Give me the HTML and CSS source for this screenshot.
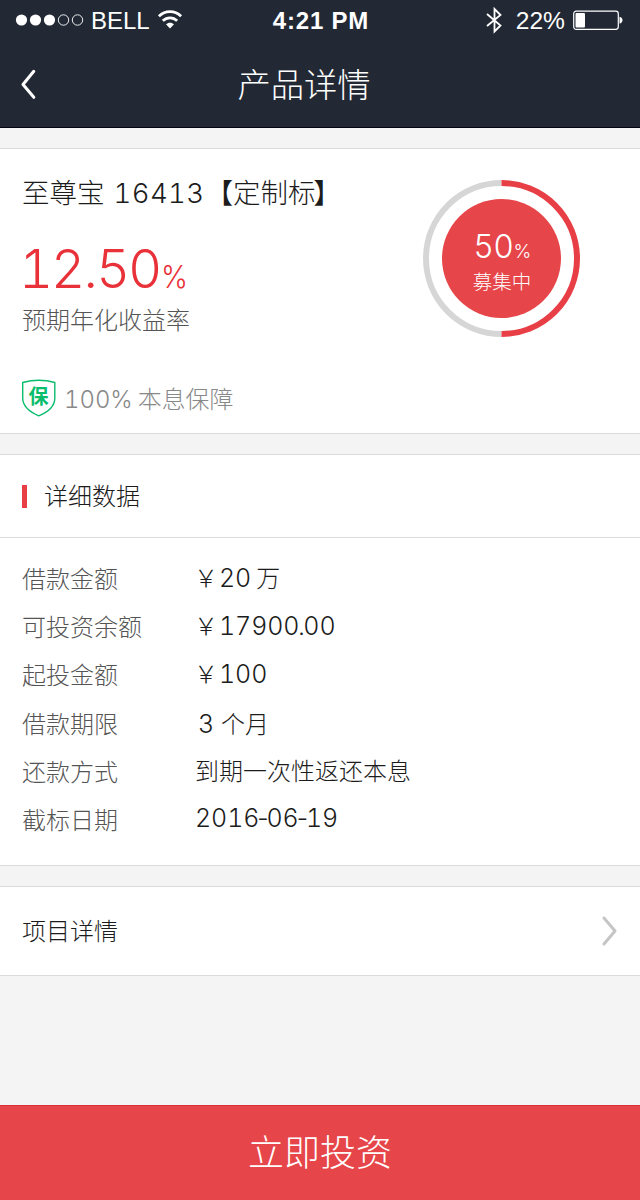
FILE: index.html
```html
<!DOCTYPE html>
<html lang="zh-CN">
<head>
<meta charset="utf-8">
<title>产品详情</title>
<link rel="stylesheet" href="styles.css">
</head>
<body>
<header class="top">
  <div class="status">
    <div class="status-left">
      <svg class="signal" width="68" height="13" viewBox="0 0 68 13"><g fill="#fff"><circle cx="5.5" cy="6" r="5.6"/><circle cx="19.5" cy="6" r="5.6"/><circle cx="33.5" cy="6" r="5.6"/></g><g fill="none" stroke="#fff" stroke-width=".9"><circle cx="47.5" cy="6" r="5.2"/><circle cx="61.5" cy="6" r="5.2"/></g></svg>
      <span class="carrier">BELL</span>
      <svg class="wifi" width="24" height="19" viewBox="0 0 24 19"><g fill="none" stroke="#fff" stroke-width="2.7"><path d="M.9 5.3C7.2-.9 16.8-.9 23.1 5.3"/><path d="M4.8 9.8C9 5.8 15 5.8 19.2 9.8"/></g><path d="M8 13.3C10.2 11.2 13.8 11.2 16 13.3L12 17.5Z" fill="#fff"/></svg>
    </div>
    <span class="clock">4:21 PM</span>
    <div class="status-right">
      <svg width="16" height="28" viewBox="0 0 16 28"><path d="M1 7L14.5 18.5L8.5 24.5V2L14.5 8L1 19" fill="none" stroke="#fff" stroke-width="1.8"/></svg>
      <span class="percent">22%</span>
      <svg class="battery" width="50" height="20" viewBox="0 0 50 20"><rect x=".7" y=".2" width="44.6" height="18.1" rx="2.5" fill="none" stroke="#fff" stroke-width="1.2"/><rect x="2.5" y="2" width="9.5" height="14.5" rx="1" fill="#fff"/><path d="M46.5 5.7C50.5 6.2 50.5 12 46.5 12.5Z" fill="#fff"/></svg>
    </div>
  </div>
  <nav class="nav">
    <svg class="back" width="16" height="30" viewBox="0 0 16 30"><path d="M13.8 2.3L3 15.5L13.8 28.3" fill="none" stroke="#fff" stroke-width="3" stroke-linecap="round" stroke-linejoin="round"/></svg>
    <h1 class="title">产品详情</h1>
  </nav>
</header>
<main class="content">
  <section class="card product">
    <div class="info">
      <h2 class="name"><span>至尊宝</span><span class="num code">16413</span><span class="tag"><b class="bracket">【</b>定制标<b class="bracket">】</b></span></h2>
      <div class="rate"><span class="num rate-value">12<i class="mark">.</i>50</span><span class="num rate-unit">%</span></div>
      <div class="caption">预期年化收益率</div>
      <div class="guarantee">
        <svg width="35" height="38" viewBox="0 0 35 38"><path d="M.7 2.5Q17 -2 32.8 2.5V18C32.8 27 25 32.5 16.7 35.8C9 32.5 .7 27 .7 18Z" fill="none" stroke="#09bd6c" stroke-width="1.4"/><text class="shield-text" x="16.6" y="23.5" text-anchor="middle">保</text></svg>
        <span class="guarantee-text"><span class="num guarantee-num">100%</span>本息保障</span>
      </div>
    </div>
    <div class="ring">
      <svg class="ring-track" width="158" height="158" viewBox="0 0 158 158"><g fill="none" stroke-width="6"><path d="M79.5 155A75.5 75.5 0 0 1 79.5 4" stroke="#d6d6d6"/><path d="M79.5 4A75.5 75.5 0 0 1 79.5 155" stroke="#e83f47"/></g><circle cx="79.5" cy="79.5" r="59.5" fill="#e64549"/></svg>
      <div class="ring-label">
        <div class="ring-value"><span class="num">50</span><span class="num ring-unit">%</span></div>
        <div class="ring-state">募集中</div>
      </div>
    </div>
  </section>
  <section class="card details">
    <h3 class="section-title"><span class="marker"></span><span class="heading">详细数据</span></h3>
    <dl class="rows">
      <div class="row"><dt>借款金额</dt><dd><span class="yen">￥</span><span class="num">20</span><span class="unit-wan">万</span></dd></div>
      <div class="row"><dt>可投资余额</dt><dd><span class="yen">￥</span><span class="num">17900<i class="mark point">.</i>00</span></dd></div>
      <div class="row"><dt>起投金额</dt><dd><span class="yen">￥</span><span class="num">100</span></dd></div>
      <div class="row"><dt>借款期限</dt><dd class="term"><span class="num">3</span><span class="unit">个月</span></dd></div>
      <div class="row"><dt>还款方式</dt><dd class="method">到期一次性返还本息</dd></div>
      <div class="row"><dt>截标日期</dt><dd class="date"><span class="num">2016<i class="mark dash">-</i>06<i class="mark dash">-</i>19</span></dd></div>
    </dl>
  </section>
  <a class="card link"><span class="link-text">项目详情</span><svg width="16" height="30" viewBox="0 0 16 30"><path d="M2 2L13 15L2 28" fill="none" stroke="#c5c5c5" stroke-width="3" stroke-linecap="round" stroke-linejoin="round"/></svg></a>
</main>
<button class="invest">立即投资</button>
</body>
</html>
```
FILE: styles.css
```css
* { box-sizing: border-box; }
body {
  margin: 0;
  width: 640px;
  height: 1200px;
  display: flex;
  flex-direction: column;
  background: #f4f4f4;
  color: #1c1c1c;
  font-family: "Noto Sans CJK SC", sans-serif;
  font-weight: 300;
  font-size: 24px;
  overflow: hidden;
}
h1, h2, h3, dl, dd { margin: 0; font-weight: inherit; }
svg { display: block; flex: none; overflow: visible; }
.num { font-family: Inter, "Liberation Sans", sans-serif; font-weight: 300; font-variant-numeric: tabular-nums; }
.mark { font-style: normal; font-variant-numeric: normal; }
.top { height: 128px; background: #222934; border-bottom: 1px solid #05050f; color: #fff; }
.status {
  height: 40px;
  display: grid;
  grid-template-columns: 1fr auto 1fr;
  align-items: center;
  padding: 0 17px 0 16px;
  font-family: "Liberation Sans", sans-serif;
  font-weight: 400;
  line-height: 40px;
}
.status-left, .status-right { display: flex; align-items: center; }
.status-left { padding-bottom: 1px; }
.carrier { margin: 1px 9px 0 7px; width: 58px; font-size: 24px; }
.clock { font-weight: 700; font-size: 24px; letter-spacing: .8px; margin-left: 3px; }
.status-right { justify-content: flex-end; }
.percent { margin: -1px 8px 0 14px; font-size: 24.6px; }
.nav { height: 87px; display: grid; grid-template-columns: 40px 1fr 40px; align-items: center; padding: 0 20px; }
.title { font-size: 33.3px; line-height: 48px; text-align: center; margin: -1px 32px 0 0; }
.content { flex: 1; padding-top: 20px; display: flex; flex-direction: column; gap: 20px; }
.card { background: #fff; border: solid #dbdbdb; border-width: 1px 0; flex: none; }
.product { height: 286px; display: flex; justify-content: space-between; padding: 0 60px 0 22px; }
.name { display: flex; align-items: baseline; margin-top: 22px; height: 40px; line-height: 40px; font-size: 27.5px; white-space: nowrap; }
.code { margin-left: 9px; letter-spacing: .4px; }
.tag { margin-left: 1px; }
.bracket { font-weight: 400; }
.bracket:last-child { margin-left: -2px; }
.rate { display: flex; align-items: baseline; height: 64px; margin-top: 26px; line-height: 64px; color: #e83138; }
.rate-value { font-size: 53px; letter-spacing: -2.2px; margin-left: -3px; }
.rate-unit { font-size: 31px; margin-left: 1px; transform: scaleX(.93); transform-origin: left; }
.caption { height: 34px; line-height: 34px; margin-top: 1px; color: #555; }
.guarantee { display: flex; align-items: center; margin-top: 42px; gap: 7px; color: #888; }
.guarantee-text { line-height: 38px; margin-top: 1px; font-size: 23.9px; }
.guarantee-num { margin-right: 5px; }
.shield-text { font: 700 20px "Noto Sans CJK SC", sans-serif; fill: #09bd6c; }
.ring { display: grid; width: 158px; height: 158px; margin-top: 30px; }
.ring-track, .ring-label { grid-area: 1 / 1; }
.ring-label { color: #fff; text-align: center; padding: 45px 0 0 2px; }
.ring-value { font-size: 32px; line-height: 40px; height: 40px; letter-spacing: -.5px; }
.ring-unit { font-size: 19px; }
.ring-state { font-size: 19.5px; line-height: 30px; margin-top: 2px; }
.details { height: 412px; }
.section-title { height: 83px; display: flex; align-items: center; gap: 18px; padding-left: 22px; border-bottom: 1px solid #dbdbdb; font-size: 24px; }
.heading { margin: -3px 0 0 -1px; }
.marker { width: 5px; height: 23px; background: #e83f47; }
.rows { padding: 16px 22px 0; }
.row { display: grid; grid-template-columns: 174px 1fr; height: 48.2px; line-height: 48px; }
.row dt { color: #555; }
.row dd { display: flex; align-items: baseline; margin-top: -1px; }
.row .num { font-size: 25px; letter-spacing: -.1px; }
.yen { width: 25px; margin-left: -2px; }
.point { margin: 0 -1.5px; }
.dash { margin: 0 -2px; }
.row .term { margin-left: 2px; margin-top: 0; }
.row .method { margin-left: -1px; }
.row .date { margin-left: -1px; }
.unit { margin-left: 7px; }
.unit-wan { margin-left: 5px; }
.link { height: 90px; display: flex; align-items: center; justify-content: space-between; padding: 0 22px; }
.link-text { margin-top: -4px; }
.invest { height: 95px; border: 0; border-top: 1px solid #dc3037; background: #e64549; color: #fff; font: 300 36px "Noto Sans CJK SC", sans-serif; padding: 0 0 6px; }
```
